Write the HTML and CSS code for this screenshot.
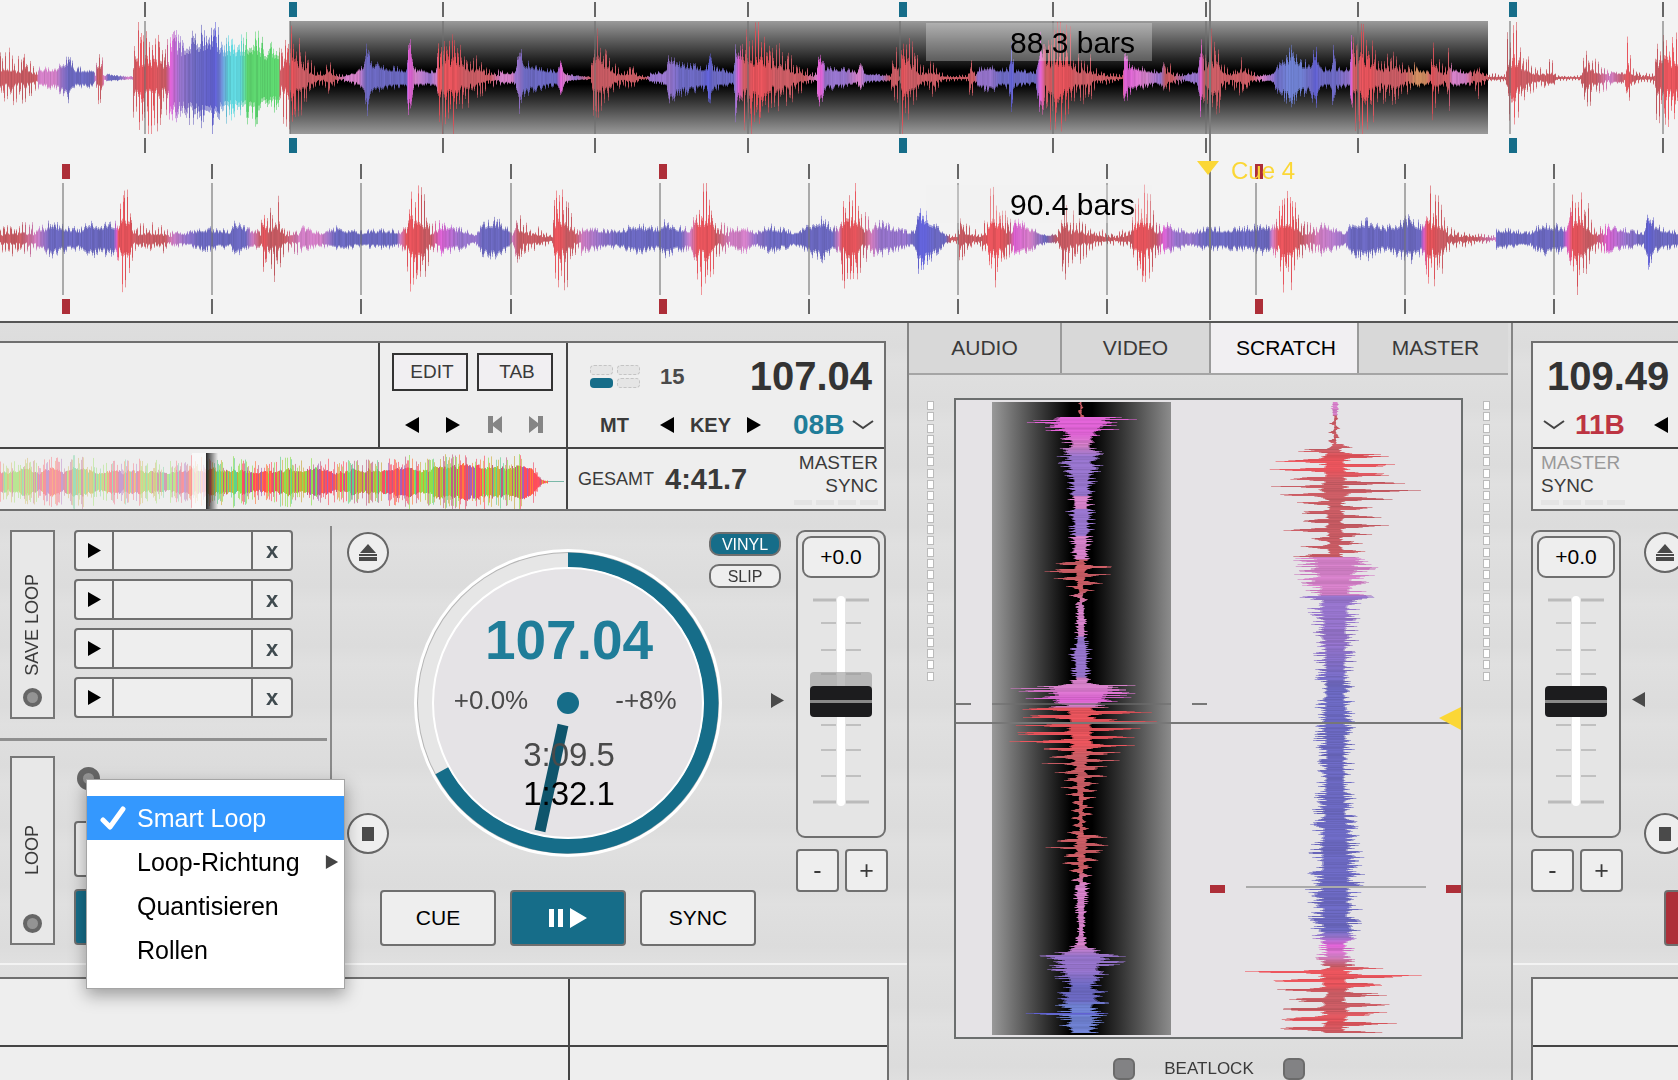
FILE: index.html
```
<!DOCTYPE html>
<html lang="de">
<head>
  <meta charset="UTF-8" />
  <meta name="viewport" content="width=device-width, initial-scale=1" />
  <title>DJ Decks</title>
  <link rel="stylesheet" href="styles.css">
</head>
<body>
  <svg class="sprite" aria-hidden="true">
    <symbol id="left" viewBox="0 0 14 16"><path d="M14 0v16L0 8z" fill="currentColor"/></symbol>
    <symbol id="right" viewBox="0 0 14 16"><path d="M0 0v16l14-8z" fill="currentColor"/></symbol>
    <symbol id="first" viewBox="0 0 14 17"><path d="M0 0h5v7L14 0v17L5 10v7H0z" fill="currentColor"/></symbol>
    <symbol id="last" viewBox="0 0 14 17"><path d="M14 0H9v7L0 0v17l9-7v7h5z" fill="currentColor"/></symbol>
    <symbol id="chevron" viewBox="0 0 22 12"><path d="M1 2l10 7 10-7" fill="none" stroke="#444" stroke-width="2"/></symbol>
    <symbol id="eject" viewBox="0 0 20 18"><path d="M10 0l8 9H2zM1 10h18v2H1zM1 13h18v4H1z" fill="#4a4a4a"/></symbol>
    <symbol id="stop" viewBox="0 0 12 14"><path d="M0 0h12v14H0z" fill="#4a4a4a"/></symbol>
    <symbol id="ticks" viewBox="0 0 58 210">
      <path d="M1 4h23M34 4h23M1 206h23M34 206h23" stroke="#bbb" stroke-width="3"/>
      <path d="M9 27h15M34 27h15M9 54h15M34 54h15M9 78h15M34 78h15M9 129h15M34 129h15M9 154h15M34 154h15M9 180h15M34 180h15" stroke="#c0c0c0" stroke-width="2"/>
      <rect x="25" width="8" height="210" rx="4" fill="#fff"/>
    </symbol>
  </svg>

  <section class="waves">
    <canvas id="waves"></canvas>
    <div class="bars bars-top">88.3 bars</div>
    <div class="bars bars-bottom">90.4 bars</div>
    <span class="cue-name">Cue 4</span>
  </section>

  <main>
    <section class="deck deck-left">
      <div class="track">
        <div class="title"></div>
        <div class="tools">
          <div class="tool-buttons">
            <button>EDIT</button>
            <button>TAB</button>
          </div>
          <div class="nav">
            <button aria-label="Zurück"><svg width="14" height="16"><use href="#left"/></svg></button>
            <button aria-label="Weiter"><svg width="14" height="16"><use href="#right"/></svg></button>
            <button aria-label="Erster" class="off"><svg width="14" height="17"><use href="#first"/></svg></button>
            <button aria-label="Letzter" class="off"><svg width="14" height="17"><use href="#last"/></svg></button>
          </div>
        </div>
        <div class="info">
          <div class="info-line">
            <div class="beats"><i></i><i></i><i class="on"></i><i></i></div>
            <b class="count">15</b>
            <b class="bpm">107.04</b>
          </div>
          <div class="key-line">
            <button class="mt">MT</button>
            <button aria-label="Tonart runter"><svg width="14" height="16"><use href="#left"/></svg></button>
            <b>KEY</b>
            <button aria-label="Tonart hoch"><svg width="14" height="16"><use href="#right"/></svg></button>
            <b class="key">08B</b>
            <button aria-label="Tonart wählen"><svg width="22" height="12"><use href="#chevron"/></svg></button>
          </div>
        </div>
        <div class="overview"><canvas id="overview"></canvas></div>
        <div class="total">
          <span>GESAMT</span>
          <b>4:41.7</b>
          <div class="sync-state">
            <span>MASTER</span>
            <span>SYNC</span>
            <div class="dashes"><i></i><i></i><i></i><i></i></div>
          </div>
        </div>
      </div>

      <div class="controls">
        <div class="loops">
          <div class="loop-group">
            <div class="side"><span>SAVE LOOP</span><button class="led" aria-label="Save Loop"></button></div>
            <div class="slots">
              <div class="slot"><button aria-label="Loop 1"><svg width="13" height="15"><use href="#right"/></svg></button><input type="text" aria-label="Name 1"><button>x</button></div>
              <div class="slot"><button aria-label="Loop 2"><svg width="13" height="15"><use href="#right"/></svg></button><input type="text" aria-label="Name 2"><button>x</button></div>
              <div class="slot"><button aria-label="Loop 3"><svg width="13" height="15"><use href="#right"/></svg></button><input type="text" aria-label="Name 3"><button>x</button></div>
              <div class="slot"><button aria-label="Loop 4"><svg width="13" height="15"><use href="#right"/></svg></button><input type="text" aria-label="Name 4"><button>x</button></div>
            </div>
          </div>
          <div class="loop-group">
            <div class="side"><span>LOOP</span><button class="led" aria-label="Loop"></button></div>
            <div class="loop-pad">
              <button class="led led-big" aria-label="Loop Menü"></button>
              <button class="pad" aria-label="Loop Länge"></button>
              <button class="pad pad-on" aria-label="Loop ein"></button>
              <ul class="menu">
                <li><button class="selected"><svg width="26" height="24" viewBox="0 0 26 24"><path d="M3 14l7 7L23 3" fill="none" stroke="#fff" stroke-width="5" stroke-linecap="round" stroke-linejoin="round"/></svg>Smart Loop</button></li>
                <li><button>Loop-Richtung<svg class="sub" width="14" height="14"><use href="#right"/></svg></button></li>
                <li><button>Quantisieren</button></li>
                <li><button>Rollen</button></li>
              </ul>
            </div>
          </div>
        </div>

        <div class="player">
          <div class="player-top">
            <div class="rounds">
              <button class="round" aria-label="Auswerfen"><svg width="20" height="18"><use href="#eject"/></svg></button>
              <button class="round" aria-label="Stopp"><svg width="12" height="14"><use href="#stop"/></svg></button>
            </div>
            <svg class="dial" width="308" height="308" viewBox="0 0 308 308">
              <circle cx="154" cy="154" r="154" fill="#fff"/>
              <circle cx="154" cy="154" r="151" fill="#b5b5b5"/>
              <circle cx="154" cy="154" r="150" fill="#e6e6e6"/>
              <path d="M154 11A143 143 0 1 1 28 221.600" fill="none" stroke="#166d89" stroke-width="15"/>
              <circle cx="154" cy="154" r="135" fill="#e5e3e6" stroke="#fff" stroke-width="2"/>
              <circle cx="154" cy="154" r="11" fill="#166d89"/>
              <path d="M149 176L126 282" stroke="#0f556c" stroke-width="11"/>
              <text class="dial-bpm" x="155" y="110">107.04</text>
              <text class="dial-pct" x="77" y="160">+0.0%</text>
              <text class="dial-pct" x="232" y="160">-+8%</text>
              <text class="dial-time" x="155" y="217">3:09.5</text>
              <text class="dial-time dial-left" x="155" y="256">1:32.1</text>
            </svg>
            <div class="modes">
              <button class="mode mode-on">VINYL</button>
              <button class="mode">SLIP</button>
              <svg class="mark" width="13" height="15"><use href="#right"/></svg>
            </div>
          </div>
          <div class="transport">
            <button>CUE</button>
            <button class="play" aria-label="Play"><svg width="38" height="20" viewBox="0 0 38 20"><path d="M0 1h5v18H0zM9 1h5v18H9zM21 0v20l17-10z" fill="#fff"/></svg></button>
            <button>SYNC</button>
          </div>
        </div>

        <div class="pitch">
          <div class="fader">
            <button>+0.0</button>
            <div class="slide">
              <svg width="58" height="210"><use href="#ticks"/></svg>
              <span class="ghost"></span>
              <input type="range" min="-8" max="8" value="0" aria-label="Pitch links">
            </div>
          </div>
          <div class="bend"><button>-</button><button>+</button></div>
        </div>
      </div>

      <div class="list">
        <div></div><div></div><div></div><div></div>
      </div>
    </section>

    <section class="mixer">
      <nav class="tabs">
        <button>AUDIO</button>
        <button>VIDEO</button>
        <button class="active">SCRATCH</button>
        <button>MASTER</button>
      </nav>
      <div class="scratch">
        <div class="meter"></div>
        <div class="screen"><canvas id="scratch"></canvas></div>
        <div class="meter"></div>
      </div>
      <div class="beatlock">
        <button aria-label="Beatlock links"></button>
        <span>BEATLOCK</span>
        <button aria-label="Beatlock rechts"></button>
      </div>
    </section>

    <section class="deck deck-right">
      <div class="track">
        <div class="info">
          <div class="info-line"><b class="bpm">109.49</b></div>
          <div class="key-line">
            <button aria-label="Tonart wählen"><svg width="22" height="12"><use href="#chevron"/></svg></button>
            <b class="key">11B</b>
            <button aria-label="Tonart runter"><svg width="14" height="16"><use href="#left"/></svg></button>
          </div>
        </div>
        <div class="total">
          <div class="sync-state">
            <span class="dim">MASTER</span>
            <span>SYNC</span>
            <div class="dashes"><i></i><i></i><i></i><i></i></div>
          </div>
        </div>
      </div>
      <div class="controls">
        <div class="pitch">
          <div class="fader">
            <button>+0.0</button>
            <div class="slide">
              <svg width="58" height="210"><use href="#ticks"/></svg>
              <input type="range" min="-8" max="8" value="0" aria-label="Pitch rechts">
            </div>
          </div>
          <div class="bend"><button>-</button><button>+</button></div>
        </div>
        <svg class="mark" width="13" height="15"><use href="#left"/></svg>
        <div class="player">
          <div class="rounds">
            <button class="round" aria-label="Auswerfen"><svg width="20" height="18"><use href="#eject"/></svg></button>
            <button class="round" aria-label="Stopp"><svg width="12" height="14"><use href="#stop"/></svg></button>
          </div>
          <div class="transport"><button class="play" aria-label="Play"></button></div>
        </div>
      </div>
      <div class="list"><div></div><div></div></div>
    </section>
  </main>

  <script src="script.js"></script>
</body>
</html>
```

FILE: styles.css
```
* {
  box-sizing: border-box;
}
body {
  margin: 0;
  height: 100vh;
  display: flex;
  flex-direction: column;
  overflow: hidden;
  font-family: "Liberation Sans", Arial, sans-serif;
  font-size: 18px;
  color: #3a3a3a;
  background: #ddd;
}
button {
  font: inherit;
  color: inherit;
  margin: 0;
  padding: 0;
  border: 0;
  background: none;
  cursor: pointer;
}
svg {
  display: block;
  flex: none;
}
canvas {
  display: block;
  width: 100%;
  height: 100%;
}
.sprite {
  position: absolute;
  width: 0;
  height: 0;
}

/* Waveforms */
.waves {
  position: relative;
  flex: none;
  height: 323px;
  background: #f3f3f3;
  border-bottom: 2px solid #555;
}
.bars {
  position: absolute;
  left: 926px;
  width: 226px;
  height: 38px;
  padding-left: 84px;
  font-size: 30px;
  line-height: 40px;
  color: #000;
  background: rgba(243, 243, 243, 0.3);
}
.bars-top {
  top: 23px;
}
.bars-bottom {
  top: 185px;
}
.cue-name {
  position: absolute;
  left: 1231px;
  top: 159px;
  font-size: 24px;
  line-height: 24px;
  color: #fbd736;
}

main {
  flex: 1;
  min-height: 0;
  display: grid;
  grid-template-columns: minmax(0, 1fr) 606px 165px;
  background: repeating-linear-gradient(#dedede 0, #dcdcdc 23px, #e0e0e0 41px, #dedede 60px);
}
.deck {
  display: flex;
  flex-direction: column;
  min-width: 0;
  overflow: hidden;
}

/* Track info */
.track {
  display: grid;
  grid-template-rows: 104px 60px;
  gap: 2px;
  margin-top: 18px;
  border: 2px solid #6f6f6f;
  background: #444;
}
.track > div {
  background: #eee;
}
.deck-left .track {
  grid-template-columns: minmax(0, 1fr) 186px 316px;
  margin-right: 21px;
  border-left: 0;
}
.deck-right .track {
  margin-left: 18px;
  border-right: 0;
}
.tools {
  padding: 10px 12px;
}
.tool-buttons {
  display: flex;
  gap: 9px;
}
.tool-buttons button {
  width: 76px;
  height: 38px;
  padding-left: 4px;
  border: 2px solid #333;
  background: #f1eff2;
  font-size: 19px;
}
.nav {
  display: flex;
  justify-content: space-between;
  align-items: center;
  margin: 25px 11px 0 13px;
  color: #000;
}
.nav .off {
  color: #858585;
}
.info {
  padding: 13px 0 0;
}
.info-line {
  display: flex;
  align-items: center;
  height: 41px;
  padding: 0 12px 0 22px;
}
.beats {
  display: grid;
  grid-template-columns: 23px 23px;
  gap: 3px 4px;
}
.beats i {
  height: 10px;
  border: 1px dashed #c4c4c4;
  border-radius: 4px;
  background: #e5e5e5;
}
.beats .on {
  border: 0;
  background: #166d89;
}
.count {
  margin-left: 20px;
  font-size: 22px;
  color: #4a4a4a;
}
.bpm {
  margin-left: auto;
  font-size: 40px;
  line-height: 41px;
  color: #333;
}
.key-line {
  display: flex;
  align-items: center;
  height: 28px;
  margin-top: 14px;
  padding-left: 32px;
  font-size: 20px;
}
.key-line button {
  color: #000;
}
.key-line .mt {
  margin-right: 31px;
  font-weight: bold;
  color: #3a3a3a;
}
.key-line > b:not(.key) {
  margin: 0 16px;
}
.key {
  margin: 0 8px 0 32px;
  font-size: 28px;
  color: #1f7d99;
}
.deck-left .overview {
  grid-column: 1 / 3;
}
.total {
  display: flex;
  align-items: center;
  padding: 0 6px 0 10px;
}
.total > b {
  margin-left: 11px;
  font-size: 29px;
}
.sync-state {
  margin-left: auto;
  align-self: flex-start;
  display: flex;
  flex-direction: column;
  align-items: flex-end;
  font-size: 19px;
  line-height: 23px;
  padding-top: 2px;
}
.dashes {
  display: flex;
  gap: 4px;
  margin-top: 3px;
}
.dashes i {
  width: 18px;
  height: 5px;
  background: #e4e4e4;
}
.deck-right .info-line {
  padding: 0 0 0 14px;
}
.deck-right .bpm {
  margin-left: 0;
}
.deck-right .key-line {
  padding-left: 10px;
}
.deck-right .key {
  margin: 0 29px 0 10px;
  color: #bd3442;
}
.deck-right .total {
  padding-left: 8px;
}
.deck-right .sync-state {
  margin-left: 0;
  align-items: flex-start;
}
.dim {
  color: #999;
}

/* Deck controls */
.controls {
  display: flex;
  flex: none;
  height: 454px;
  border-bottom: 2px solid #f3f3f3;
}
.loops {
  width: 332px;
  flex: none;
  margin-top: 15px;
  border-right: 2px solid #8a8a8a;
}
.loop-group {
  display: flex;
  gap: 19px;
  height: 215px;
  margin-right: 3px;
  padding: 4px 0 0 10px;
  border-bottom: 3px solid #8f8f8f;
}
.loop-group + .loop-group {
  padding-top: 15px;
  border: 0;
}
.side {
  display: grid;
  grid-template-rows: 1fr auto 1fr;
  justify-items: center;
  width: 45px;
  height: 189px;
  padding: 10px 0;
  border: 2px solid #777;
  background: #e8e8e8;
}
.side span {
  grid-row: 2;
  writing-mode: vertical-rl;
  transform: rotate(180deg);
}
.led {
  width: 19px;
  height: 19px;
  border: 4px solid #666;
  border-radius: 50%;
  background: #949494;
}
.side .led {
  grid-row: 3;
  align-self: end;
}
.slots {
  display: flex;
  flex-direction: column;
  gap: 8px;
}
.slot {
  display: flex;
  width: 219px;
  height: 41px;
  border: 2px solid #6f6f6f;
  border-radius: 4px;
  background: #eee;
}
.slot button {
  width: 36px;
  font-size: 22px;
  font-weight: bold;
  color: #3f4a4f;
}
.slot button svg {
  margin: auto;
  color: #000;
}
.slot button:last-child {
  width: 38px;
}
.slot input {
  flex: 1;
  min-width: 0;
  border: solid #6f6f6f;
  border-width: 0 2px;
  background: none;
}
.loop-pad {
  position: relative;
  flex: 1;
}
.led-big {
  display: block;
  width: 23px;
  height: 23px;
  margin: 11px 0 31px 3px;
  border-width: 6px;
}
.pad {
  display: block;
  width: 100px;
  height: 56px;
  margin-bottom: 12px;
  border: 2px solid #6f6f6f;
  border-radius: 4px;
  background: #eee;
}
.pad-on {
  background: #166d89;
}

.menu {
  position: absolute;
  z-index: 5;
  left: 12px;
  top: 23px;
  width: 259px;
  margin: 0;
  padding: 16px 0;
  list-style: none;
  background: #fff;
  border: 1px solid #a5a5a5;
  box-shadow: 0 6px 16px rgba(0, 0, 0, 0.35);
}
.menu button {
  display: flex;
  align-items: center;
  width: 100%;
  height: 44px;
  padding: 0 5px 0 50px;
  font-size: 25px;
  color: #000;
}
.menu .selected {
  padding-left: 13px;
  gap: 11px;
  color: #fff;
  background: #3498fe;
}
.sub {
  margin-left: auto;
  color: #444;
}

.player {
  flex: 1;
  padding: 21px 10px 0 15px;
}
.player-top {
  display: flex;
  height: 340px;
}
.rounds {
  display: flex;
  flex-direction: column;
  gap: 240px;
}
.round {
  display: flex;
  align-items: center;
  justify-content: center;
  width: 42px;
  height: 41px;
  flex: none;
  border: 2px solid #666;
  border-radius: 50%;
  background: #eee;
}
.dial {
  margin: 17px 0 0 25px;
}
.dial text {
  text-anchor: middle;
  font-size: 26px;
  fill: #4a4a4a;
}
.dial .dial-bpm {
  font-size: 55px;
  font-weight: bold;
  fill: #1f7d99;
}
.dial .dial-time {
  font-size: 33px;
}
.dial .dial-left {
  fill: #000;
}
.modes {
  display: flex;
  flex-direction: column;
  gap: 8px;
  margin-left: -13px;
}
.mode {
  width: 72px;
  height: 24px;
  border: 2px solid #6f6f6f;
  border-radius: 10px;
  background: #eee;
  font-size: 16px;
  line-height: 21px;
}
.mode-on {
  background: #166d89;
  color: #fff;
}
.mark {
  color: #4a4a4a;
}
.modes .mark {
  margin: 97px 0 0 62px;
}
.transport {
  display: flex;
  gap: 14px;
  margin: 18px 0 0 33px;
}
.transport button {
  width: 116px;
  height: 56px;
  border: 2px solid #6f6f6f;
  border-radius: 4px;
  background: #eee;
  font-size: 21px;
  color: #000;
}
.transport .play {
  background: #166d89;
}
.play svg {
  margin: auto;
}

.pitch {
  width: 92px;
  flex: none;
  margin: 19px 19px 0 0;
}
.fader {
  width: 90px;
  height: 308px;
  padding: 4px;
  border: 2px solid #6f6f6f;
  border-radius: 9px;
  background: #e5e5e5;
}
.fader button {
  width: 78px;
  height: 42px;
  border: 2px solid #6f6f6f;
  border-radius: 9px;
  background: #eee;
  font-size: 21px;
  color: #000;
}
.slide {
  display: grid;
  justify-items: center;
  margin-top: 18px;
}
.slide > * {
  grid-area: 1 / 1;
}
.slide input {
  writing-mode: vertical-lr;
  appearance: none;
  width: 62px;
  height: 210px;
  margin: 0;
  background: none;
}
.slide input::-webkit-slider-thumb {
  appearance: none;
  width: 62px;
  height: 31px;
  border-radius: 4px;
  background: linear-gradient(#1c1c1e 14px, #8a8a8a 14px, #8a8a8a 17px, #1c1c1e 17px);
}
.ghost {
  width: 62px;
  height: 30px;
  margin-top: 76px;
  border-radius: 4px;
  background: rgba(150, 150, 150, 0.6);
}
.bend {
  display: flex;
  justify-content: space-between;
  margin-top: 11px;
}
.bend button {
  width: 43px;
  height: 43px;
  border: 2px solid #6f6f6f;
  border-radius: 4px;
  background: #eee;
  font-size: 25px;
}
.deck-right .pitch {
  margin: 19px 9px 0 18px;
}
.deck-right .mark {
  margin-top: 181px;
}
.deck-right .player {
  flex: none;
  margin-left: -1px;
  padding: 21px 0 0;
}
.deck-right .rounds {
  height: 340px;
}
.deck-right .transport {
  margin-left: 20px;
}
.deck-right .play {
  background: #ad2e38;
}

/* Browser list */
.list {
  flex: 1;
  display: grid;
  grid-template-rows: 66px 1fr;
  gap: 2px;
  margin: 12px 18px 0 0;
  border: solid #6f6f6f;
  border-width: 2px 2px 0 0;
  background: #444;
}
.list div {
  background: #eee;
}
.deck-left .list {
  grid-template-columns: minmax(0, 1fr) 317px;
}
.deck-right .list {
  margin: 12px 0 0 18px;
  border-width: 2px 0 0 2px;
}

/* Mixer */
.mixer {
  border: solid #858585;
  border-width: 0 2px;
}
.tabs {
  display: grid;
  grid-template-columns: 153fr 149fr 148fr 149fr;
  height: 52px;
  margin-right: 3px;
  border-bottom: 2px solid #a5a5a5;
  background: #d8d8d8;
}
.tabs button {
  font-size: 21px;
}
.tabs button:not(:last-child) {
  border-right: 2px solid #9a9a9a;
}
.tabs button:last-child {
  padding-left: 4px;
}
.tabs .active {
  background: #f1eff2;
  color: #000;
  padding-left: 4px;
}
.scratch {
  display: flex;
  gap: 20px;
  margin-top: 23px;
  padding: 0 21px 0 18px;
}
.screen {
  flex: 1;
  height: 641px;
  min-width: 0;
  border: 2px solid #6b6e6e;
  background: #e5e3e6;
}
.meter {
  display: flex;
  flex-direction: column;
  justify-content: space-between;
  width: 7px;
  height: 280px;
  margin-top: 3px;
}
.meter i {
  height: 9px;
  border: 1px solid #bbb;
  background: #fff;
}
.beatlock {
  display: flex;
  justify-content: center;
  align-items: center;
  gap: 29px;
  margin: 19px 2px 0 0;
  font-size: 17px;
}
.beatlock button {
  width: 22px;
  height: 22px;
  border: 2px solid #6b6b6b;
  border-radius: 6px;
  background: #828284;
}
```

FILE: script.js
```
const colors = {
  r: [202, 92, 100], R: [232, 84, 92], p: [212, 128, 200], m: [222, 98, 212],
  v: [150, 116, 204], b: [108, 105, 194], B: [98, 98, 216], c: [96, 214, 222],
  g: [94, 216, 112], o: [208, 140, 96], l: [112, 130, 212]
};

// position, amplitude, colour
const deckA = '0 24 r,12 30 r,20 18 r,25 28 r,36 12 r,38 12 p,55 12 p,62 20 v,68 26 b,75 12 b,93 11 b,95 4 p,97 32 r,101 32 r,104 3 p,108 5 b,118 3 b,127 2 p,132 2 p,133 42 r,140 60 R,150 56 R,165 46 r,170 56 m,180 46 v,195 54 b,215 60 B,220 46 l,228 46 c,240 46 c,247 48 g,255 52 g,265 38 g,278 36 g,280 32 r,288 60 R,293 56 R,300 44 r,308 20 r,315 10 r,324 8 r,328 20 r,335 6 r,345 4 p,358 9 p,363 18 v,366 42 b,372 20 b,385 14 b,406 11 b,408 44 m,411 40 m,414 12 p,430 9 v,436 10 p,438 46 R,446 60 R,455 56 R,465 28 r,478 22 r,490 10 r,500 8 p,512 7 p,515 10 v,519 42 v,524 20 b,545 12 b,556 9 b,560 20 m,565 6 p,575 3 v,590 2 r,593 50 r,598 56 r,606 32 r,615 12 r,625 8 r,633 18 r,637 5 r,645 2 r,650 6 v,665 8 v,669 30 v,680 20 b,700 14 b,707 14 B,709 40 B,713 14 b,733 8 b,735 46 v,738 30 m,743 44 r,753 60 R,765 50 R,775 36 r,785 34 r,795 18 r,805 10 r,816 5 p,818 34 m,821 28 m,825 14 v,845 12 v,857 7 p,860 18 p,865 6 v,880 4 v,890 5 r,892 34 r,896 30 r,899 4 r,902 56 R,910 48 r,918 18 r,925 8 r,933 20 r,940 5 r,955 3 r,967 3 r,970 32 r,974 8 r,977 12 v,990 17 v,1000 10 b,1008 12 b,1011 38 B,1014 10 b,1035 8 b,1040 48 m,1045 36 r,1055 60 R,1068 54 R,1075 22 r,1090 20 r,1095 10 r,1110 5 r,1122 3 r,1124 38 m,1128 18 m,1145 11 p,1160 8 v,1165 22 r,1172 8 r,1185 5 v,1197 9 v,1200 44 m,1204 26 r,1207 50 r,1215 50 r,1222 16 r,1230 8 r,1243 20 r,1252 8 r,1262 4 p,1272 5 v,1276 16 b,1288 28 l,1291 36 l,1300 20 l,1310 18 b,1315 38 B,1320 12 b,1331 12 b,1333 42 b,1336 12 b,1349 12 v,1351 48 m,1353 42 r,1362 60 R,1370 50 R,1378 24 r,1395 30 r,1405 18 r,1415 13 o,1425 8 o,1430 8 r,1432 38 R,1437 22 r,1446 12 r,1448 34 r,1452 12 p,1465 8 p,1472 9 r,1476 22 r,1482 8 r,1490 4 r,1505 4 r,1507 42 r,1514 60 R,1522 32 r,1530 16 r,1540 10 r,1552 17 r,1556 3 r,1580 3 r,1583 24 r,1588 32 r,1595 17 r,1610 8 p,1624 6 r,1627 36 R,1632 10 r,1640 5 r,1654 6 r,1656 44 r,1664 60 R,1672 54 R,1678 30 R';
const deckB = '0 14 r,20 18 r,36 15 p,45 14 v,50 22 b,60 16 b,80 12 b,88 22 b,100 18 b,113 20 b,116 18 m,118 30 R,122 60 R,130 44 R,134 16 r,140 14 r,148 16 r,165 12 r,172 10 p,185 7 v,200 14 b,230 10 b,234 24 b,245 14 b,252 10 p,260 12 r,264 42 R,268 30 r,278 38 r,284 12 r,300 15 p,320 8 p,335 14 b,360 9 b,385 12 b,396 10 b,400 9 p,406 20 R,410 60 R,418 44 R,424 50 r,430 20 r,440 18 m,460 13 v,475 5 v,482 20 b,495 24 b,508 14 b,512 6 p,518 32 r,524 18 r,540 10 r,552 5 r,554 44 R,560 56 R,566 44 r,575 16 r,582 15 p,600 12 v,620 10 b,635 18 b,658 13 b,665 22 b,680 14 b,690 12 p,697 40 R,701 60 R,710 50 R,716 22 r,730 12 p,745 16 p,755 8 v,770 16 b,795 8 b,810 18 b,822 26 b,832 14 b,838 14 p,842 34 R,846 60 R,855 56 R,862 28 r,872 18 p,880 20 v,905 10 v,914 10 b,918 36 B,925 30 B,935 20 b,945 6 b,950 5 r,957 6 r,960 32 r,966 14 r,980 8 r,987 20 R,991 60 R,1000 42 R,1008 22 r,1014 26 m,1030 14 p,1045 6 b,1057 6 r,1062 46 r,1068 26 r,1080 22 r,1095 10 r,1115 5 r,1130 12 r,1135 44 R,1145 56 R,1155 26 r,1163 20 m,1175 14 v,1190 8 v,1205 13 b,1240 13 b,1268 18 b,1272 15 p,1278 24 R,1282 60 R,1292 50 R,1300 18 r,1320 19 p,1345 8 v,1350 20 b,1365 24 b,1385 14 b,1410 26 b,1420 18 b,1423 16 m,1427 46 R,1433 48 R,1440 44 r,1447 12 r,1475 7 r,1495 3 p,1496 13 b,1530 8 b,1543 20 b,1562 15 b,1566 14 m,1572 42 R,1577 60 R,1585 40 r,1595 14 r,1607 17 m,1625 12 v,1643 8 b,1648 36 B,1655 16 b,1670 11 b,1678 8 b';
const scratchA = '2 3 r,16 4 r,17 58 m,25 56 m,33 28 m,45 20 p,56 26 v,80 17 v,95 14 v,96 14 p,108 14 p,109 17 v,135 13 v,136 13 p,158 10 p,160 14 r,166 44 r,178 28 r,190 14 r,205 6 p,235 7 p,237 7 v,255 14 v,276 10 v,278 10 p,283 16 p,286 74 p,300 54 m,306 30 p,308 76 R,335 78 R,344 68 R,355 50 r,365 36 r,385 24 r,395 16 r,430 10 r,436 28 r,445 42 r,455 24 r,470 14 r,485 9 p,500 8 p,530 4 p,545 8 p,556 48 v,570 38 v,585 22 b,600 36 b,605 26 l,612 24 l,613 60 B,615 26 l,633 20 l';
const scratchB = '2 5 p,14 5 p,16 5 r,42 8 r,50 44 r,56 84 R,70 78 R,80 66 r,94 94 r,100 54 r,115 50 r,130 56 r,145 38 r,156 50 r,157 50 p,180 38 p,194 32 p,196 46 v,200 30 v,240 24 v,290 20 b,320 24 b,360 20 b,400 22 b,450 30 b,500 30 b,530 26 b,536 28 v,545 20 m,556 20 p,566 30 r,570 90 R,585 92 R,592 64 r,600 60 r,608 80 r,620 74 R,633 70 r';

const parse = text => text.split(',').map(p => {
  const [at, amp, c] = p.split(' ');
  return { at: +at, amp: +amp, c: colors[c], rough: 'rR'.includes(c) };
});

function random(seed) {
  return () => {
    seed = (seed * 1664525 + 1013904223) % 4294967296;
    return seed / 4294967296;
  };
}

function setup(id, w, h) {
  const canvas = document.getElementById(id);
  canvas.width = canvas.clientWidth;
  canvas.height = canvas.clientHeight;
  const ctx = canvas.getContext('2d');
  ctx.scale(canvas.width / w, canvas.height / h);
  return ctx;
}

// bar(pos, up, down) paints one slice of the wave. swing is the period of the
// low frequency movement that bass hits show, core the part that is always solid
function wave(ctx, text, limit, seed, swing, core, bar) {
  const pts = parse(text);
  const rnd = random(seed);
  let phase = 0;
  for (let i = 0; i < pts.length - 1; i++) {
    const a = pts[i], b = pts[i + 1];
    for (let x = a.at; x < b.at; x++) {
      const t = (x - a.at) / (b.at - a.at);
      const amp = a.amp + (b.amp - a.amp) * t;
      phase += Math.PI * 2 / swing * (0.6 + 0.8 * rnd());
      let up, down;
      if (a.rough) {
        const s = Math.sin(phase);
        const base = core * (0.5 + 0.5 * rnd());
        up = amp * (base + Math.max(0, s) * (0.3 + 0.6 * rnd()));
        down = amp * (base + Math.max(0, -s) * (0.3 + 0.6 * rnd()));
      } else {
        const solid = 0.3 + core * 0.6;
        up = amp * (solid + (1 - solid) * rnd() ** 2);
        down = amp * (solid + (1 - solid) * rnd() ** 2);
      }
      up = Math.min(limit, up);
      down = Math.min(limit, down);
      const shade = 0.92 + rnd() * 0.12;
      const c = a.c.map((v, k) => Math.round((v + (b.c[k] - v) * t) * shade));
      ctx.fillStyle = `rgba(${c}, 0.6)`;
      bar(x, up, down);
      ctx.fillStyle = `rgb(${c})`;
      bar(x, up * 0.85, down * 0.85);
    }
  }
}

function drawDecks() {
  const ctx = setup('waves', 1678, 321);
  const fill = (c, x, y, w, h) => { ctx.fillStyle = c; ctx.fillRect(x, y, w, h); };

  const dark = ctx.createLinearGradient(0, 21, 0, 134);
  dark.addColorStop(0, '#9a9a9a');
  dark.addColorStop(0.44, '#000');
  dark.addColorStop(0.56, '#000');
  dark.addColorStop(1, '#9a9a9a');
  fill(dark, 290, 21, 1198, 113);

  wave(ctx, deckA, 56, 7, 3, 0.42, (x, up, down) => ctx.fillRect(x, 78 - up, 1, up + down));
  wave(ctx, deckB, 56, 21, 3, 0.42, (x, up, down) => ctx.fillRect(x, 239 - up, 1, up + down));

  const tick = (x, y, h, color) => {
    fill('rgba(110, 110, 110, 0.55)', x - 1, y + 19, 2, h);
    for (const ty of [y, y + 23 + h]) {
      if (color) fill(color, x - 1, ty, 8, 15);
      else fill('#666', x - 1, ty, 2, 15);
    }
  };
  [145, 290, 443, 595, 748, 900, 1053, 1206, 1358, 1510, 1663].forEach((x, i) => {
    tick(x, 2, 113, i % 4 === 1 ? '#166d89' : '');
  });
  [63, 212, 361, 511, 660, 809, 958, 1107, 1256, 1405, 1554].forEach((x, i) => {
    tick(x, 164, 112, i % 4 === 0 ? '#ad2e38' : '');
  });

  fill('#7a7a7a', 1209, 0, 2, 320);
  ctx.fillStyle = '#fbd736';
  ctx.beginPath();
  ctx.moveTo(1197, 161);
  ctx.lineTo(1219, 161);
  ctx.lineTo(1208, 175);
  ctx.fill();
}

function drawOverview() {
  const ctx = setup('overview', 566, 60);
  const rnd = random(5);
  const low = ['#ff4d5a', '#f0506a', '#ff5060', '#ff7a3c', '#c06080', '#a860b8'];
  const high = ['#8ee04a', '#8ee04a', '#c8a83e', '#d0b040', '#60d090', '#c06080'];
  let amp = 11;
  for (let x = 0; x < 548; x++) {
    const end = x > 530 ? Math.max(0.06, ((548 - x) / 18) ** 2) : 1;
    const goal = x > 385 ? 15 : 11;
    amp += (goal - amp) * 0.15 + (rnd() - 0.5) * 3;
    const up = amp * end * (0.9 + 0.15 * rnd());
    const down = amp * end * (0.9 + 0.15 * rnd());
    const peak = rnd() > 0.5 ? (3 + rnd() * 10) * end : 0;
    const hues = Math.sin(x / 11) + rnd() * 1.6 > 0.6 ? high : low;
    ctx.fillStyle = hues[Math.floor(rnd() * hues.length)];
    ctx.globalAlpha = 0.65;
    ctx.fillRect(x, 33 - up - peak, 1, up + down + 2 * peak);
    ctx.globalAlpha = 1;
    ctx.fillRect(x, 33 - up, 1, up + down);
  }
  ctx.fillStyle = '#7ab8a8';
  ctx.fillRect(548, 32, 16, 1);
  // played part fades out
  ctx.fillStyle = 'rgba(238, 238, 238, 0.45)';
  ctx.fillRect(0, 0, 206, 60);
  ctx.fillStyle = 'rgba(255, 255, 255, 0.6)';
  ctx.fillRect(192, 4, 14, 56);
  const shade = ctx.createLinearGradient(206, 0, 218, 0);
  shade.addColorStop(0, '#222');
  shade.addColorStop(1, 'rgba(60, 60, 60, 0)');
  ctx.fillStyle = shade;
  ctx.fillRect(206, 4, 12, 56);
}

function drawScratch() {
  const ctx = setup('scratch', 505, 637);
  const fill = (c, x, y, w, h) => { ctx.fillStyle = c; ctx.fillRect(x, y, w, h); };

  const dark = ctx.createLinearGradient(36, 0, 215, 0);
  dark.addColorStop(0, '#999');
  dark.addColorStop(0.44, '#000');
  dark.addColorStop(0.56, '#000');
  dark.addColorStop(1, '#8c8c8c');
  fill(dark, 36, 2, 179, 633);

  wave(ctx, scratchA, 78, 11, 8, 0.2, (y, l, r) => ctx.fillRect(125 - l, y, l + r, 1));
  wave(ctx, scratchB, 90, 33, 9, 0.2, (y, l, r) => ctx.fillRect(379 - l, y, l + r, 1));

  fill('#777', 0, 303, 15, 2);
  fill('rgba(110, 110, 110, 0.6)', 36, 303, 179, 2);
  fill('#777', 236, 303, 15, 2);
  fill('#777', 0, 322, 505, 2);
  fill('#aaa', 290, 486, 180, 2);
  fill('#ad2e38', 254, 485, 15, 8);
  fill('#ad2e38', 490, 485, 15, 8);
  ctx.fillStyle = '#fbd736';
  ctx.beginPath();
  ctx.moveTo(505, 307);
  ctx.lineTo(505, 330);
  ctx.lineTo(483, 318);
  ctx.fill();
}

document.querySelectorAll('.meter').forEach(meter => {
  for (let i = 0; i < 25; i++) meter.appendChild(document.createElement('i'));
});

function draw() {
  drawDecks();
  drawOverview();
  drawScratch();
}
draw();
window.addEventListener('resize', draw);
```
